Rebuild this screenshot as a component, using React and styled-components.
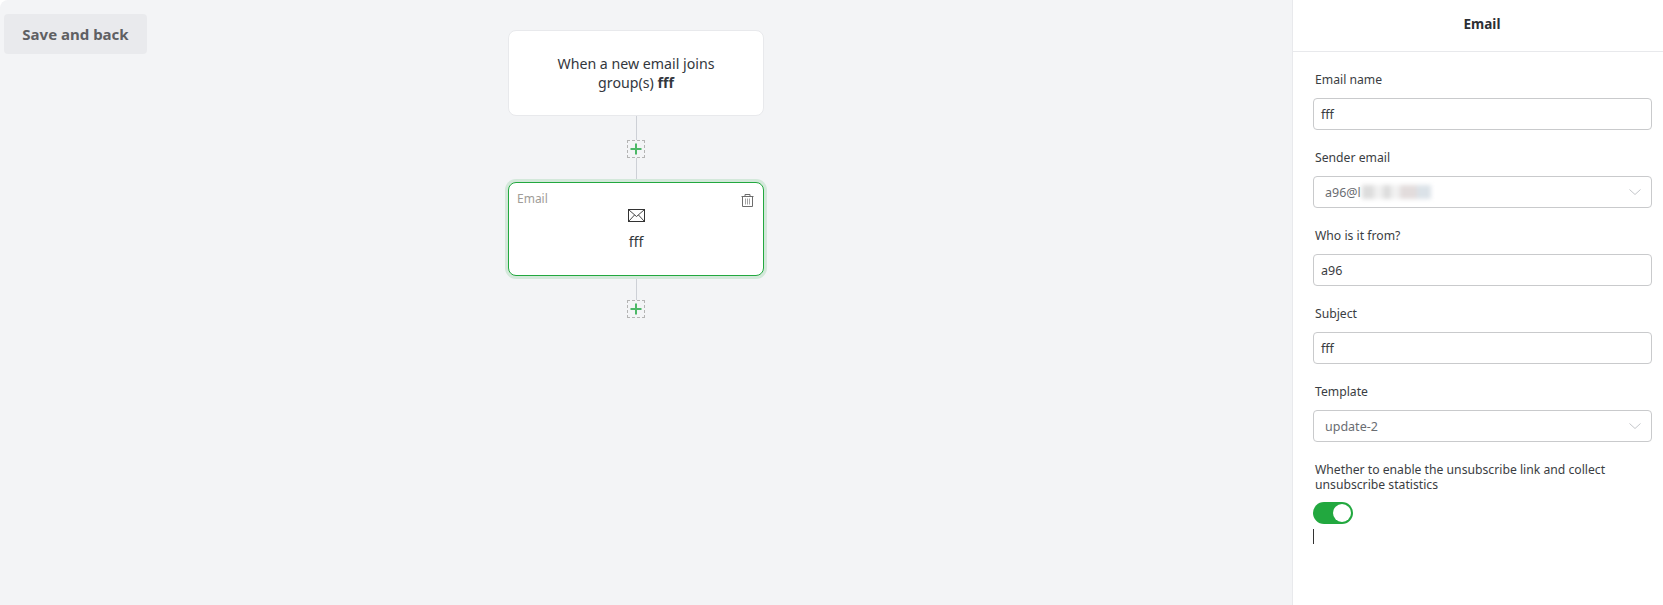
import React from 'react';
import styled, { createGlobalStyle } from 'styled-components';

const GlobalStyle = createGlobalStyle`
  html, body {
    margin: 0;
    height: 100%;
    background: #fff;
    font-family: 'Noto Sans', 'Open Sans', sans-serif;
  }
`;

const Page = styled.div`
  display: flex;
  width: 1663px;
  height: 605px;
  overflow: hidden;
`;

const Canvas = styled.div`
  position: relative;
  flex: 1;
  display: flex;
  flex-direction: column;
  align-items: center;
  padding: 30px 20px 0 0;
  background: #f3f4f6;
  border-top-left-radius: 8px;
`;

const SaveButton = styled.button`
  position: absolute;
  top: 14px;
  left: 4px;
  width: 143px;
  height: 40px;
  padding: 0;
  border: none;
  border-radius: 4px;
  background: #e9eaed;
  color: #5f6063;
  font-family: inherit;
  font-size: 15px;
  font-weight: 700;
`;

const TriggerCard = styled.div`
  box-sizing: border-box;
  width: 256px;
  height: 86px;
  display: flex;
  align-items: center;
  justify-content: center;
  padding: 0 40px;
  background: #fff;
  border: 1px solid #e8e9ec;
  border-radius: 8px;
  color: #33373d;
  font-size: 14.2px;
  line-height: 19px;
  text-align: center;

  b {
    font-weight: 700;
  }
`;

const Connector = styled.div`
  width: 1px;
  height: ${(p) => p.$height}px;
  background: #cdd0d6;
`;

const PlusBox = styled.div`
  box-sizing: border-box;
  width: 18px;
  height: 18px;
  display: flex;
  align-items: center;
  justify-content: center;
  border: 1px dashed #b4b4b4;
  background: #f3f4f6;
`;

const EmailCard = styled.div`
  position: relative;
  box-sizing: border-box;
  width: 256px;
  height: 94px;
  display: flex;
  flex-direction: column;
  align-items: center;
  padding-top: 26px;
  background: #fff;
  border: 1px solid #22a83f;
  border-radius: 8px;
  box-shadow: 0 0 0 3px #d3e8da;
`;

const CardTag = styled.span`
  position: absolute;
  top: 7px;
  left: 8px;
  color: #a09c98;
  font-size: 12px;
  line-height: 17px;
`;

const TrashButton = styled.span`
  position: absolute;
  top: 11px;
  right: 9px;
  display: flex;
`;

const CardName = styled.div`
  margin-top: 10px;
  color: #33373d;
  font-size: 14.2px;
  line-height: 19px;
`;

const Panel = styled.aside`
  box-sizing: border-box;
  flex: 0 0 371px;
  border-left: 1px solid #e8e9ec;
  background: #fff;
`;

const PanelHeader = styled.header`
  box-sizing: border-box;
  height: 52px;
  display: flex;
  align-items: center;
  justify-content: center;
  padding: 0 0 4px 8px;
  border-bottom: 1px solid #e8e9ec;
  color: #2c2f34;
  font-size: 13.5px;
  font-weight: 700;
`;

const Form = styled.div`
  display: flex;
  flex-direction: column;
  gap: 20px;
  padding: 20px 11px 0 20px;
`;

const Field = styled.div`
  display: flex;
  flex-direction: column;
  gap: ${(p) => p.$gap || 11}px;
`;

const Label = styled.div`
  padding-left: 2px;
  color: #3a3d42;
  font-size: 12.2px;
  line-height: 15px;
`;

const InputBox = styled.div`
  box-sizing: border-box;
  height: 32px;
  display: flex;
  align-items: center;
  justify-content: space-between;
  padding: 0 ${(p) => (p.$select ? '10px' : '7px')} 0 ${(p) => (p.$select ? '11px' : '7px')};
  border: 1px solid #c9cacc;
  border-radius: 4px;
  color: ${(p) => (p.$select ? '#6a6d72' : '#3a3d42')};
  font-size: 12.5px;
`;

const MaskedValue = styled.span`
  display: inline-flex;
  align-items: center;
`;

const BlurBlock = styled.span`
  display: inline-block;
  width: 69px;
  height: 14px;
  margin-left: 1px;
  background: linear-gradient(90deg, #ddd 0 18%, #f0f0f0 18% 30%, #ddd 30% 42%, #f1f1f1 42% 55%, #e2dcdc 55% 80%, #dbe2e8 80%);
  filter: blur(2px);
`;

const SwitchTrack = styled.div`
  box-sizing: border-box;
  width: 40px;
  height: 22px;
  display: flex;
  align-items: center;
  justify-content: flex-end;
  padding-right: 2px;
  border-radius: 11px;
  background: #22a83f;
`;

const SwitchKnob = styled.span`
  width: 18px;
  height: 18px;
  border-radius: 50%;
  background: #fff;
`;

const Caret = styled.div`
  width: 1px;
  height: 15px;
  margin-top: 5px;
  background: #333;
`;

const GreenPlus = () => (
  <svg width="12" height="12" viewBox="0 0 12 12">
    <path d="M6 0.5v11M0.5 6h11" stroke="#4cb867" strokeWidth="2" />
  </svg>
);

const EnvelopeIcon = () => (
  <svg width="17" height="13" viewBox="0 0 17 13" fill="none" stroke="#333" shapeRendering="crispEdges">
    <rect x="0.5" y="0.5" width="16" height="12" />
    <path d="M1 1l7.5 6.5L16 1M1 12l5.5-6M16 12l-5.5-6" strokeWidth="0.9" shapeRendering="auto" />
  </svg>
);

const TrashIcon = () => (
  <svg width="13" height="13" viewBox="0 0 13 13" fill="none" stroke="#6d6d6d">
    <path d="M0.5 2.5h12M4 2.5v-2h5v2M1.5 2.5v10h10v-10" />
    <path d="M4.5 4.5v6M6.5 4.5v6M8.5 4.5v6" stroke="#a5a5a5" />
  </svg>
);

const SelectArrow = () => (
  <svg width="12" height="6" viewBox="0 0 12 6" fill="none" stroke="#c4c6ca">
    <path d="M0.5 0.5L6 5.5L11.5 0.5" />
  </svg>
);

const fields = [
  { label: 'Email name', value: 'fff' },
  { label: 'Sender email', value: 'a96@l', select: true, masked: true },
  { label: 'Who is it from?', value: 'a96' },
  { label: 'Subject', value: 'fff' },
  { label: 'Template', value: 'update-2', select: true },
];

export default function App() {
  return (
    <>
      <GlobalStyle />
      <Page>
        <Canvas>
          <SaveButton>Save and back</SaveButton>
          <TriggerCard>
            <span>
              When a new email joins group(s) <b>fff</b>
            </span>
          </TriggerCard>
          <Connector $height={24} />
          <PlusBox>
            <GreenPlus />
          </PlusBox>
          <Connector $height={24} />
          <EmailCard>
            <CardTag>Email</CardTag>
            <TrashButton>
              <TrashIcon />
            </TrashButton>
            <EnvelopeIcon />
            <CardName>fff</CardName>
          </EmailCard>
          <Connector $height={24} />
          <PlusBox>
            <GreenPlus />
          </PlusBox>
        </Canvas>
        <Panel>
          <PanelHeader>Email</PanelHeader>
          <Form>
            {fields.map((f) => (
              <Field key={f.label}>
                <Label>{f.label}</Label>
                <InputBox $select={f.select}>
                  {f.masked ? (
                    <MaskedValue>
                      {f.value}
                      <BlurBlock />
                    </MaskedValue>
                  ) : (
                    <span>{f.value}</span>
                  )}
                  {f.select && <SelectArrow />}
                </InputBox>
              </Field>
            ))}
            <Field $gap={10}>
              <Label>Whether to enable the unsubscribe link and collect unsubscribe statistics</Label>
              <div>
                <SwitchTrack>
                  <SwitchKnob />
                </SwitchTrack>
                <Caret />
              </div>
            </Field>
          </Form>
        </Panel>
      </Page>
    </>
  );
}
